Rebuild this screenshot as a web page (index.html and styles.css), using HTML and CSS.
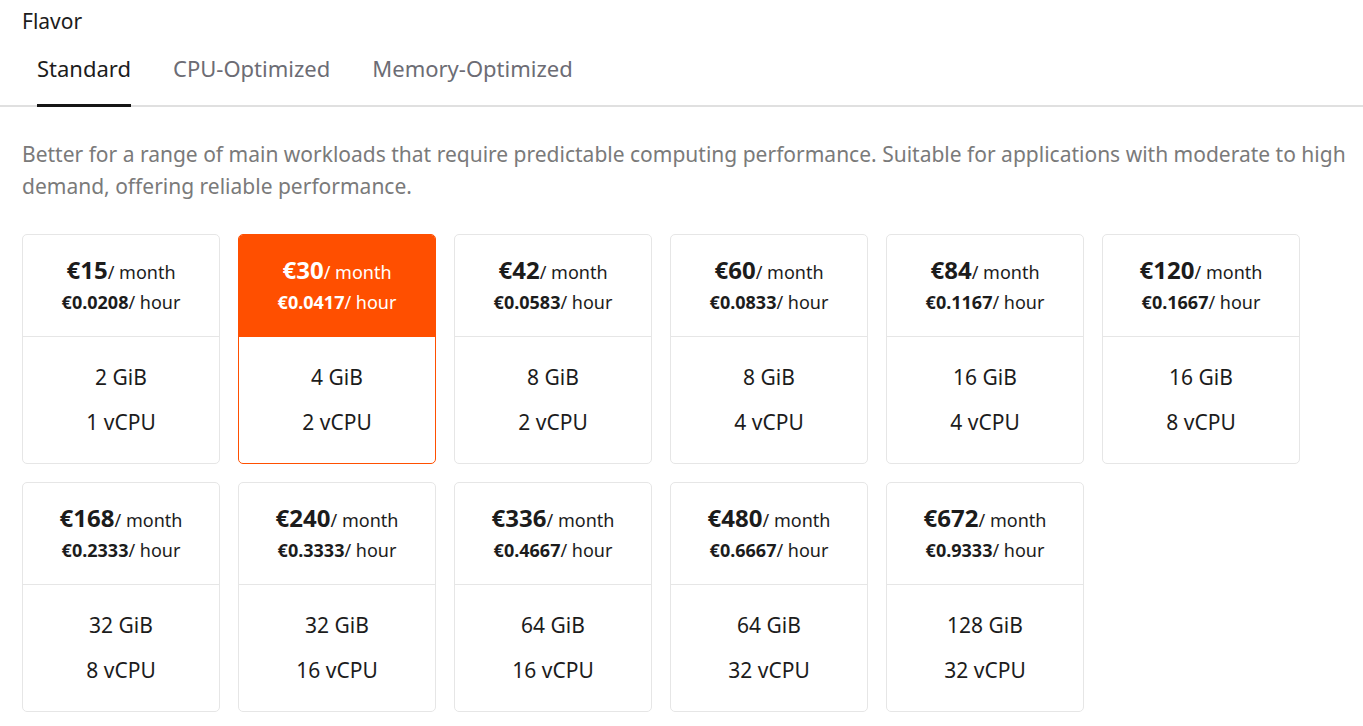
FILE: index.html
```html
<!DOCTYPE html>
<html>
<head>
    <title>Flavor</title>
    <link rel="stylesheet" href="styles.css">
</head>
<body>
    <div class="label">Flavor</div>
    <div class="tabs">
        <div class="tab active">Standard</div>
        <div class="tab">CPU-Optimized</div>
        <div class="tab">Memory-Optimized</div>
    </div>
    <p class="description">Better for a range of main workloads that require predictable computing performance. Suitable for applications with moderate to high demand, offering reliable performance.</p>

    <div class="plans">
        <div class="plan">
            <div class="plan-head">
                <div class="month"><b>€15</b>/ month</div>
                <div class="hour"><b>€0.0208</b>/ hour</div>
            </div>
            <div class="plan-body">
                <div>2 GiB</div>
                <div>1 vCPU</div>
            </div>
        </div>
        <div class="plan selected">
            <div class="plan-head">
                <div class="month"><b>€30</b>/ month</div>
                <div class="hour"><b>€0.0417</b>/ hour</div>
            </div>
            <div class="plan-body">
                <div>4 GiB</div>
                <div>2 vCPU</div>
            </div>
        </div>
        <div class="plan">
            <div class="plan-head">
                <div class="month"><b>€42</b>/ month</div>
                <div class="hour"><b>€0.0583</b>/ hour</div>
            </div>
            <div class="plan-body">
                <div>8 GiB</div>
                <div>2 vCPU</div>
            </div>
        </div>
        <div class="plan">
            <div class="plan-head">
                <div class="month"><b>€60</b>/ month</div>
                <div class="hour"><b>€0.0833</b>/ hour</div>
            </div>
            <div class="plan-body">
                <div>8 GiB</div>
                <div>4 vCPU</div>
            </div>
        </div>
        <div class="plan">
            <div class="plan-head">
                <div class="month"><b>€84</b>/ month</div>
                <div class="hour"><b>€0.1167</b>/ hour</div>
            </div>
            <div class="plan-body">
                <div>16 GiB</div>
                <div>4 vCPU</div>
            </div>
        </div>
        <div class="plan">
            <div class="plan-head">
                <div class="month"><b>€120</b>/ month</div>
                <div class="hour"><b>€0.1667</b>/ hour</div>
            </div>
            <div class="plan-body">
                <div>16 GiB</div>
                <div>8 vCPU</div>
            </div>
        </div>
        <div class="plan">
            <div class="plan-head">
                <div class="month"><b>€168</b>/ month</div>
                <div class="hour"><b>€0.2333</b>/ hour</div>
            </div>
            <div class="plan-body">
                <div>32 GiB</div>
                <div>8 vCPU</div>
            </div>
        </div>
        <div class="plan">
            <div class="plan-head">
                <div class="month"><b>€240</b>/ month</div>
                <div class="hour"><b>€0.3333</b>/ hour</div>
            </div>
            <div class="plan-body">
                <div>32 GiB</div>
                <div>16 vCPU</div>
            </div>
        </div>
        <div class="plan">
            <div class="plan-head">
                <div class="month"><b>€336</b>/ month</div>
                <div class="hour"><b>€0.4667</b>/ hour</div>
            </div>
            <div class="plan-body">
                <div>64 GiB</div>
                <div>16 vCPU</div>
            </div>
        </div>
        <div class="plan">
            <div class="plan-head">
                <div class="month"><b>€480</b>/ month</div>
                <div class="hour"><b>€0.6667</b>/ hour</div>
            </div>
            <div class="plan-body">
                <div>64 GiB</div>
                <div>32 vCPU</div>
            </div>
        </div>
        <div class="plan">
            <div class="plan-head">
                <div class="month"><b>€672</b>/ month</div>
                <div class="hour"><b>€0.9333</b>/ hour</div>
            </div>
            <div class="plan-body">
                <div>128 GiB</div>
                <div>32 vCPU</div>
            </div>
        </div>
    </div>
</body>
</html>
```

FILE: styles.css
```css
body {
    margin: 0;
    font-family: "Noto Sans", "Open Sans", sans-serif;
    color: #1c1c1c;
    background-color: #fff;
}
.label {
    font-size: 21px;
    line-height: 24px;
    padding: 9px 22px 0;
}
.tabs {
    display: flex;
    gap: 42px;
    padding: 0 37px;
    margin-top: 20px;
    border-bottom: 2px solid #e0e0e0;
}
.tab {
    font-size: 22px;
    line-height: 30px;
    padding-bottom: 21px;
    color: #6c6c74;
    border-bottom: 3px solid transparent;
    margin-bottom: -2px;
}
.tab.active {
    color: #1c1c1c;
    border-bottom-color: #161616;
}
.description {
    margin: 31px 0 0;
    padding: 0 10px 0 22px;
    font-size: 21px;
    line-height: 32px;
    color: #7a7a7a;
}
.plans {
    display: grid;
    grid-template-columns: repeat(6, 198px);
    gap: 18px;
    padding: 0 22px;
    margin-top: 32px;
}
.plan {
    height: 228px;
    border: 1px solid #e6e6e6;
    border-radius: 5px;
    display: flex;
    flex-direction: column;
    overflow: hidden;
    text-align: center;
}
.plan-head {
    height: 101px;
    border-bottom: 1px solid #e6e6e6;
    display: flex;
    flex-direction: column;
    justify-content: center;
    gap: 3px;
}
.month {
    font-size: 18px;
    line-height: 28px;
}
.month b {
    font-size: 24px;
}
.hour {
    font-size: 18px;
    line-height: 26px;
}
.hour b {
    font-size: 18px;
}
.plan-body {
    flex: 1;
    display: flex;
    flex-direction: column;
    justify-content: center;
    gap: 17px;
    font-size: 21px;
    line-height: 28px;
    padding-bottom: 1px;
}
.plan.selected {
    border-color: #ff4f00;
}
.plan.selected .plan-head {
    background-color: #ff4f00;
    border-bottom-color: #ff4f00;
    color: #fff;
}
```
